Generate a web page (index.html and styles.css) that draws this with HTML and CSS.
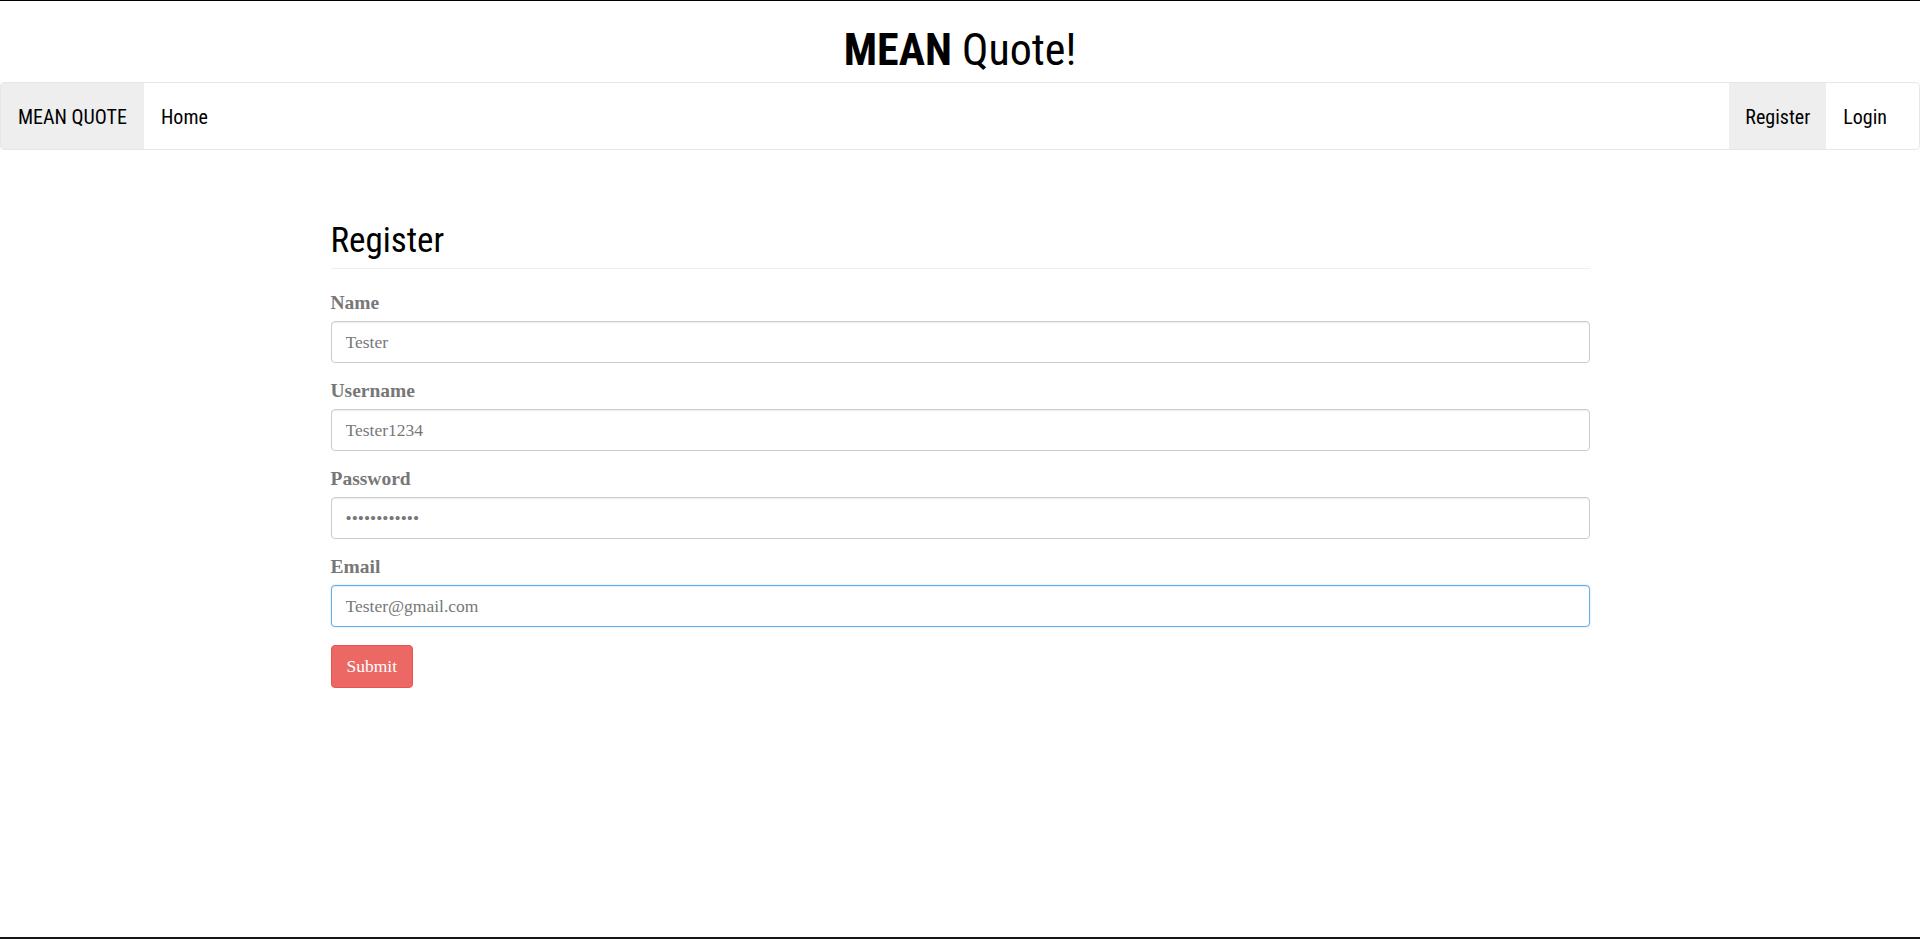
FILE: index.html
```html
<!DOCTYPE html>
<html lang="en">
<head>
<meta charset="utf-8">
<title>MEAN Quote!</title>
<link rel="stylesheet" href="styles.css">
</head>
<body>
  <header class="site-header">
    <h1 class="site-title"><strong>MEAN</strong> Quote!</h1>
  </header>
  <nav class="navbar">
    <a class="nav-item brand" href="#">MEAN QUOTE</a>
    <a class="nav-item" href="#">Home</a>
    <div class="nav-spacer"></div>
    <a class="nav-item active" href="#">Register</a>
    <a class="nav-item" href="#">Login</a>
  </nav>
  <main class="container">
    <h2 class="page-header">Register</h2>
    <form class="register-form">
      <div class="form-group">
        <label class="form-label" for="name">Name</label>
        <input class="form-control" id="name" type="text" value="Tester">
      </div>
      <div class="form-group">
        <label class="form-label" for="username">Username</label>
        <input class="form-control" id="username" type="text" value="Tester1234">
      </div>
      <div class="form-group">
        <label class="form-label" for="password">Password</label>
        <input class="form-control" id="password" type="password" value="testerpass12">
      </div>
      <div class="form-group">
        <label class="form-label" for="email">Email</label>
        <input class="form-control is-focused" id="email" type="text" value="Tester@gmail.com">
      </div>
      <button class="btn-primary" type="button">Submit</button>
    </form>
  </main>
</body>
</html>
```
FILE: styles.css
```css
html, body {
  margin: 0;
  padding: 0;
}

body {
  height: 100vh;
  box-sizing: border-box;
  border-top: 1px solid #000;
  border-bottom: 2px solid #151515;
  background: #fff;
  font-family: "Liberation Serif", "Times New Roman", serif;
  color: #777;
}

.site-title {
  margin: 25px 0 8px;
  text-align: center;
  font-family: "Roboto Condensed", "Liberation Sans", sans-serif;
  font-size: 44px;
  line-height: 48px;
  font-weight: normal;
  color: #000;
}

.site-title strong {
  font-weight: bold;
}

.navbar {
  display: flex;
  height: 68px;
  box-sizing: border-box;
  border: 1px solid #e7e7e7;
  border-radius: 4px;
  padding-right: 15px;
  overflow: hidden;
}

.nav-item {
  display: flex;
  align-items: center;
  padding: 1px 17px 0;
  font-family: "Roboto Condensed", "Liberation Sans", sans-serif;
  font-size: 20px;
  color: #000;
  text-decoration: none;
}

.nav-item.active {
  padding: 1px 16px 0;
}

.nav-item.brand,
.nav-item.active {
  background: #eee;
}

.nav-spacer {
  flex: 1;
}

.container {
  width: 1259px;
  margin: 72px auto 0;
}

.page-header {
  margin: 0 0 21px;
  padding-bottom: 8px;
  border-bottom: 1px solid #eee;
  font-family: "Roboto Condensed", "Liberation Sans", sans-serif;
  font-size: 35px;
  line-height: 38px;
  font-weight: normal;
  color: #000;
}

.form-group {
  margin-bottom: 15px;
}

.form-label {
  display: block;
  margin-bottom: 5px;
  font-size: 19.5px;
  line-height: 26px;
  font-weight: bold;
  color: #777;
}

.form-control {
  display: block;
  width: 100%;
  height: 42px;
  box-sizing: border-box;
  padding: 0 14px;
  border: 1px solid #ccc;
  border-radius: 4px;
  font-family: "Liberation Serif", "Times New Roman", serif;
  font-size: 17.5px;
  color: #777;
  background: #fff;
  box-shadow: inset 0 1px 1px rgba(0, 0, 0, 0.075);
  outline: none;
}

.form-control.is-focused {
  border-color: #66afe9;
  box-shadow: inset 0 1px 1px rgba(0, 0, 0, 0.075), 0 0 2px rgba(102, 175, 233, 0.5);
}

.btn-primary {
  margin-top: 3px;
  height: 43px;
  padding: 0 15px;
  border: 1px solid #e95350;
  border-radius: 4px;
  background: #eb6864;
  color: #fff;
  font-family: "Liberation Serif", "Times New Roman", serif;
  font-size: 17.5px;
  cursor: pointer;
}
```
